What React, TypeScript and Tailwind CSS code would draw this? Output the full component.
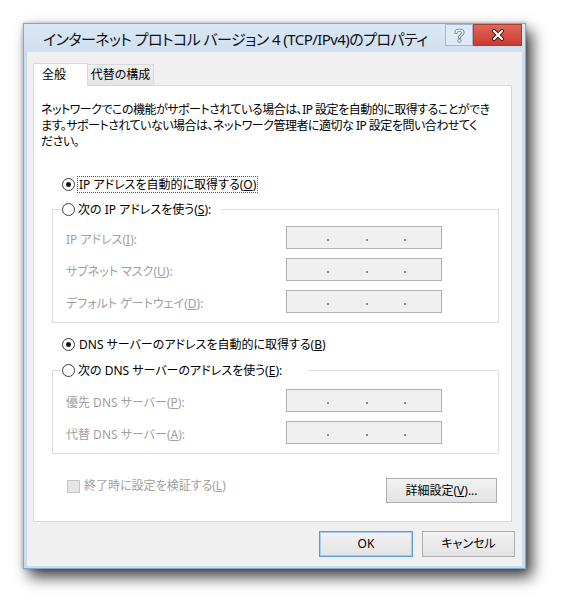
const font = "font-['Noto_Sans','Noto_Sans_CJK_JP',sans-serif] [font-feature-settings:'palt']"

function Radio({ checked }: { checked?: boolean }) {
  return (
    <span className="flex h-[13px] w-[13px] shrink-0 items-center justify-center rounded-full border border-[#3c3c3c] bg-white">
      {checked && <span className="h-[5px] w-[5px] rounded-full bg-[#1a1a1a]" />}
    </span>
  )
}

function IpBox() {
  return (
    <div className="flex h-[23px] w-[156px] items-end border border-[#b0b0b0] bg-[#f0f0f0] pb-[7px]">
      <span className="ml-[40px] h-[2px] w-[2px] bg-[#8c8c8c]" />
      <span className="ml-[37px] h-[2px] w-[2px] bg-[#8c8c8c]" />
      <span className="ml-[36px] h-[2px] w-[2px] bg-[#8c8c8c]" />
    </div>
  )
}

function Row({ label, k, rest }: { label: string; k: string; rest: string }) {
  return (
    <div className="flex h-[23px] items-center">
      <span className="w-[233px] pl-[13px] pt-[5px] text-[#a0a0a0]">
        {label}(<u>{k}</u>){rest}
      </span>
      <IpBox />
    </div>
  )
}

function Button({ children, def, w }: { children: React.ReactNode; def?: boolean; w: string }) {
  return (
    <div
      className={`flex items-center justify-center bg-gradient-to-b from-[#f2f2f2] to-[#e3e3e3] ${w} ${
        def ? 'border border-[#5b9bd8] shadow-[inset_0_0_0_1px_#a9cdf0]' : 'border border-[#acacac]'
      }`}
    >
      {children}
    </div>
  )
}

export default function App() {
  return (
    <div className={`h-[613px] w-[570px] bg-white pl-[23px] pt-[23px] text-[12px] leading-[16px] text-black ${font}`}>
      <div className="flex h-[546px] w-[503px] flex-col border border-[#7fa8d6] bg-[#cadcf0] shadow-[0_0_4px_rgba(0,0,0,0.25),6px_8px_14px_rgba(0,0,0,0.75)]">
        {/* title bar */}
        <div className="flex h-[28px] shrink-0 bg-gradient-to-b from-[#dbe7f4] to-[#cfe0f2]">
          <div className="flex flex-1 items-center whitespace-nowrap pl-[19px] pt-[2px] text-[15px] tracking-[-0.55px] text-[#111]">
            インターネット プロトコル バージョン 4 (TCP/IPv4)のプロパティ
          </div>
          <div className="flex h-[22px] w-[28px] items-center justify-center border border-[#9fb9d6] bg-[#dfeaf6]">
            <svg width="11" height="15" viewBox="0 0 11 15">
              <path d="M2 4.5 C2 1.5 9 1.5 9 4.5 C9 7 5.5 7 5.5 9.5" fill="none" stroke="#6d7f93" strokeWidth="3.2" strokeLinecap="round" />
              <path d="M2 4.5 C2 1.5 9 1.5 9 4.5 C9 7 5.5 7 5.5 9.5" fill="none" stroke="#f4f7fb" strokeWidth="1.4" strokeLinecap="round" />
              <circle cx="5.5" cy="12.8" r="1.7" fill="#f4f7fb" stroke="#6d7f93" strokeWidth="0.9" />
            </svg>
          </div>
          <div className="mr-[3px] flex h-[22px] w-[49px] items-center justify-center border border-[#b03a30] bg-gradient-to-b from-[#e0665a] to-[#c9392c]">
            <svg width="14" height="12" viewBox="0 0 14 12">
              <path d="M3 2 L11 10 M11 2 L3 10" stroke="#4a1410" strokeWidth="4" strokeLinecap="round" />
              <path d="M3 2 L11 10 M11 2 L3 10" stroke="#ffffff" strokeWidth="2.2" strokeLinecap="round" />
            </svg>
          </div>
        </div>

        {/* client area */}
        <div className="mx-[3px] mb-[2px] flex flex-1 flex-col bg-[#f0f0f0] pl-[6px]">
          {/* tabs */}
          <div className="flex items-end pt-[11px]">
            <div className="relative z-10 -mb-px flex h-[23px] w-[55px] items-center border border-b-0 border-[#d9d9d9] bg-white pl-[8px]">
              全般
            </div>
            <div className="flex h-[21px] w-[66px] items-center justify-center border border-b-0 border-l-0 border-[#d9d9d9] bg-gradient-to-b from-[#f0f0f0] to-[#e5e5e5] pb-[1px]">
              代替の構成
            </div>
          </div>

          {/* tab page */}
          <div className="mr-[10px] flex h-[437px] flex-col border border-[#d9d9d9] bg-white">
            <div className="pl-[7px] pt-[16px] tracking-[-0.5px]">
              <div className="whitespace-nowrap">ネットワークでこの機能がサポートされている場合は、IP 設定を自動的に取得することができ</div>
              <div className="whitespace-nowrap">ます。サポートされていない場合は、ネットワーク管理者に適切な IP 設定を問い合わせてく</div>
              <div className="whitespace-nowrap">ださい。</div>
            </div>

            <div className="ml-[28px] mt-[25px] flex h-[19px] items-center">
              <Radio checked />
              <span className="ml-[2px] border border-dotted border-[#555] px-px leading-[15px]">
                IP アドレスを自動的に取得する(<u>O</u>)
              </span>
            </div>

            <fieldset className="ml-[18px] mt-[6px] w-[447px] border border-[#dcdcdc] pb-[9px]">
              <legend className="ml-[8px] flex h-[19px] items-center pl-px pr-[10px]">
                <Radio />
                <span className="ml-[3px]">
                  次の IP アドレスを使う(<u>S</u>):
                </span>
              </legend>
              <div className="mt-[7px] flex flex-col gap-[9px]">
                <Row label="IP アドレス" k="I" rest=":" />
                <Row label="サブネット マスク" k="U" rest=":" />
                <Row label="デフォルト ゲートウェイ" k="D" rest=":" />
              </div>
            </fieldset>

            <div className="ml-[28px] mt-[12px] flex h-[19px] items-center">
              <Radio checked />
              <span className="ml-[4px]">
                DNS サーバーのアドレスを自動的に取得する(<u>B</u>)
              </span>
            </div>

            <fieldset className="ml-[18px] mt-[7px] w-[447px] border border-[#dcdcdc] pb-[9px]">
              <legend className="ml-[8px] flex h-[19px] items-center pl-px pr-[26px]">
                <Radio />
                <span className="ml-[3px]">
                  次の DNS サーバーのアドレスを使う(<u>E</u>):
                </span>
              </legend>
              <div className="mt-[9px] flex flex-col gap-[9px]">
                <Row label="優先 DNS サーバー" k="P" rest=":" />
                <Row label="代替 DNS サーバー" k="A" rest=":" />
              </div>
            </fieldset>

            <div className="mr-[14px] mt-[24px] flex items-start justify-between">
              <div className="ml-[33px] flex items-center">
                <span className="h-[13px] w-[13px] border border-[#c4c4c4] bg-[#e6e6e6]" />
                <span className="ml-[4px] text-[#a0a0a0]">
                  終了時に設定を検証する(<u>L</u>)
                </span>
              </div>
              <Button w="w-[111px] h-[25px]">
                詳細設定(<u>V</u>)...
              </Button>
            </div>
          </div>

          {/* dialog buttons */}
          <div className="mt-[9px] flex justify-end gap-[9px] pr-[7px]">
            <Button def w="w-[94px] h-[26px]">
              OK
            </Button>
            <Button w="w-[93px] h-[26px]">キャンセル</Button>
          </div>
        </div>
      </div>
    </div>
  )
}
